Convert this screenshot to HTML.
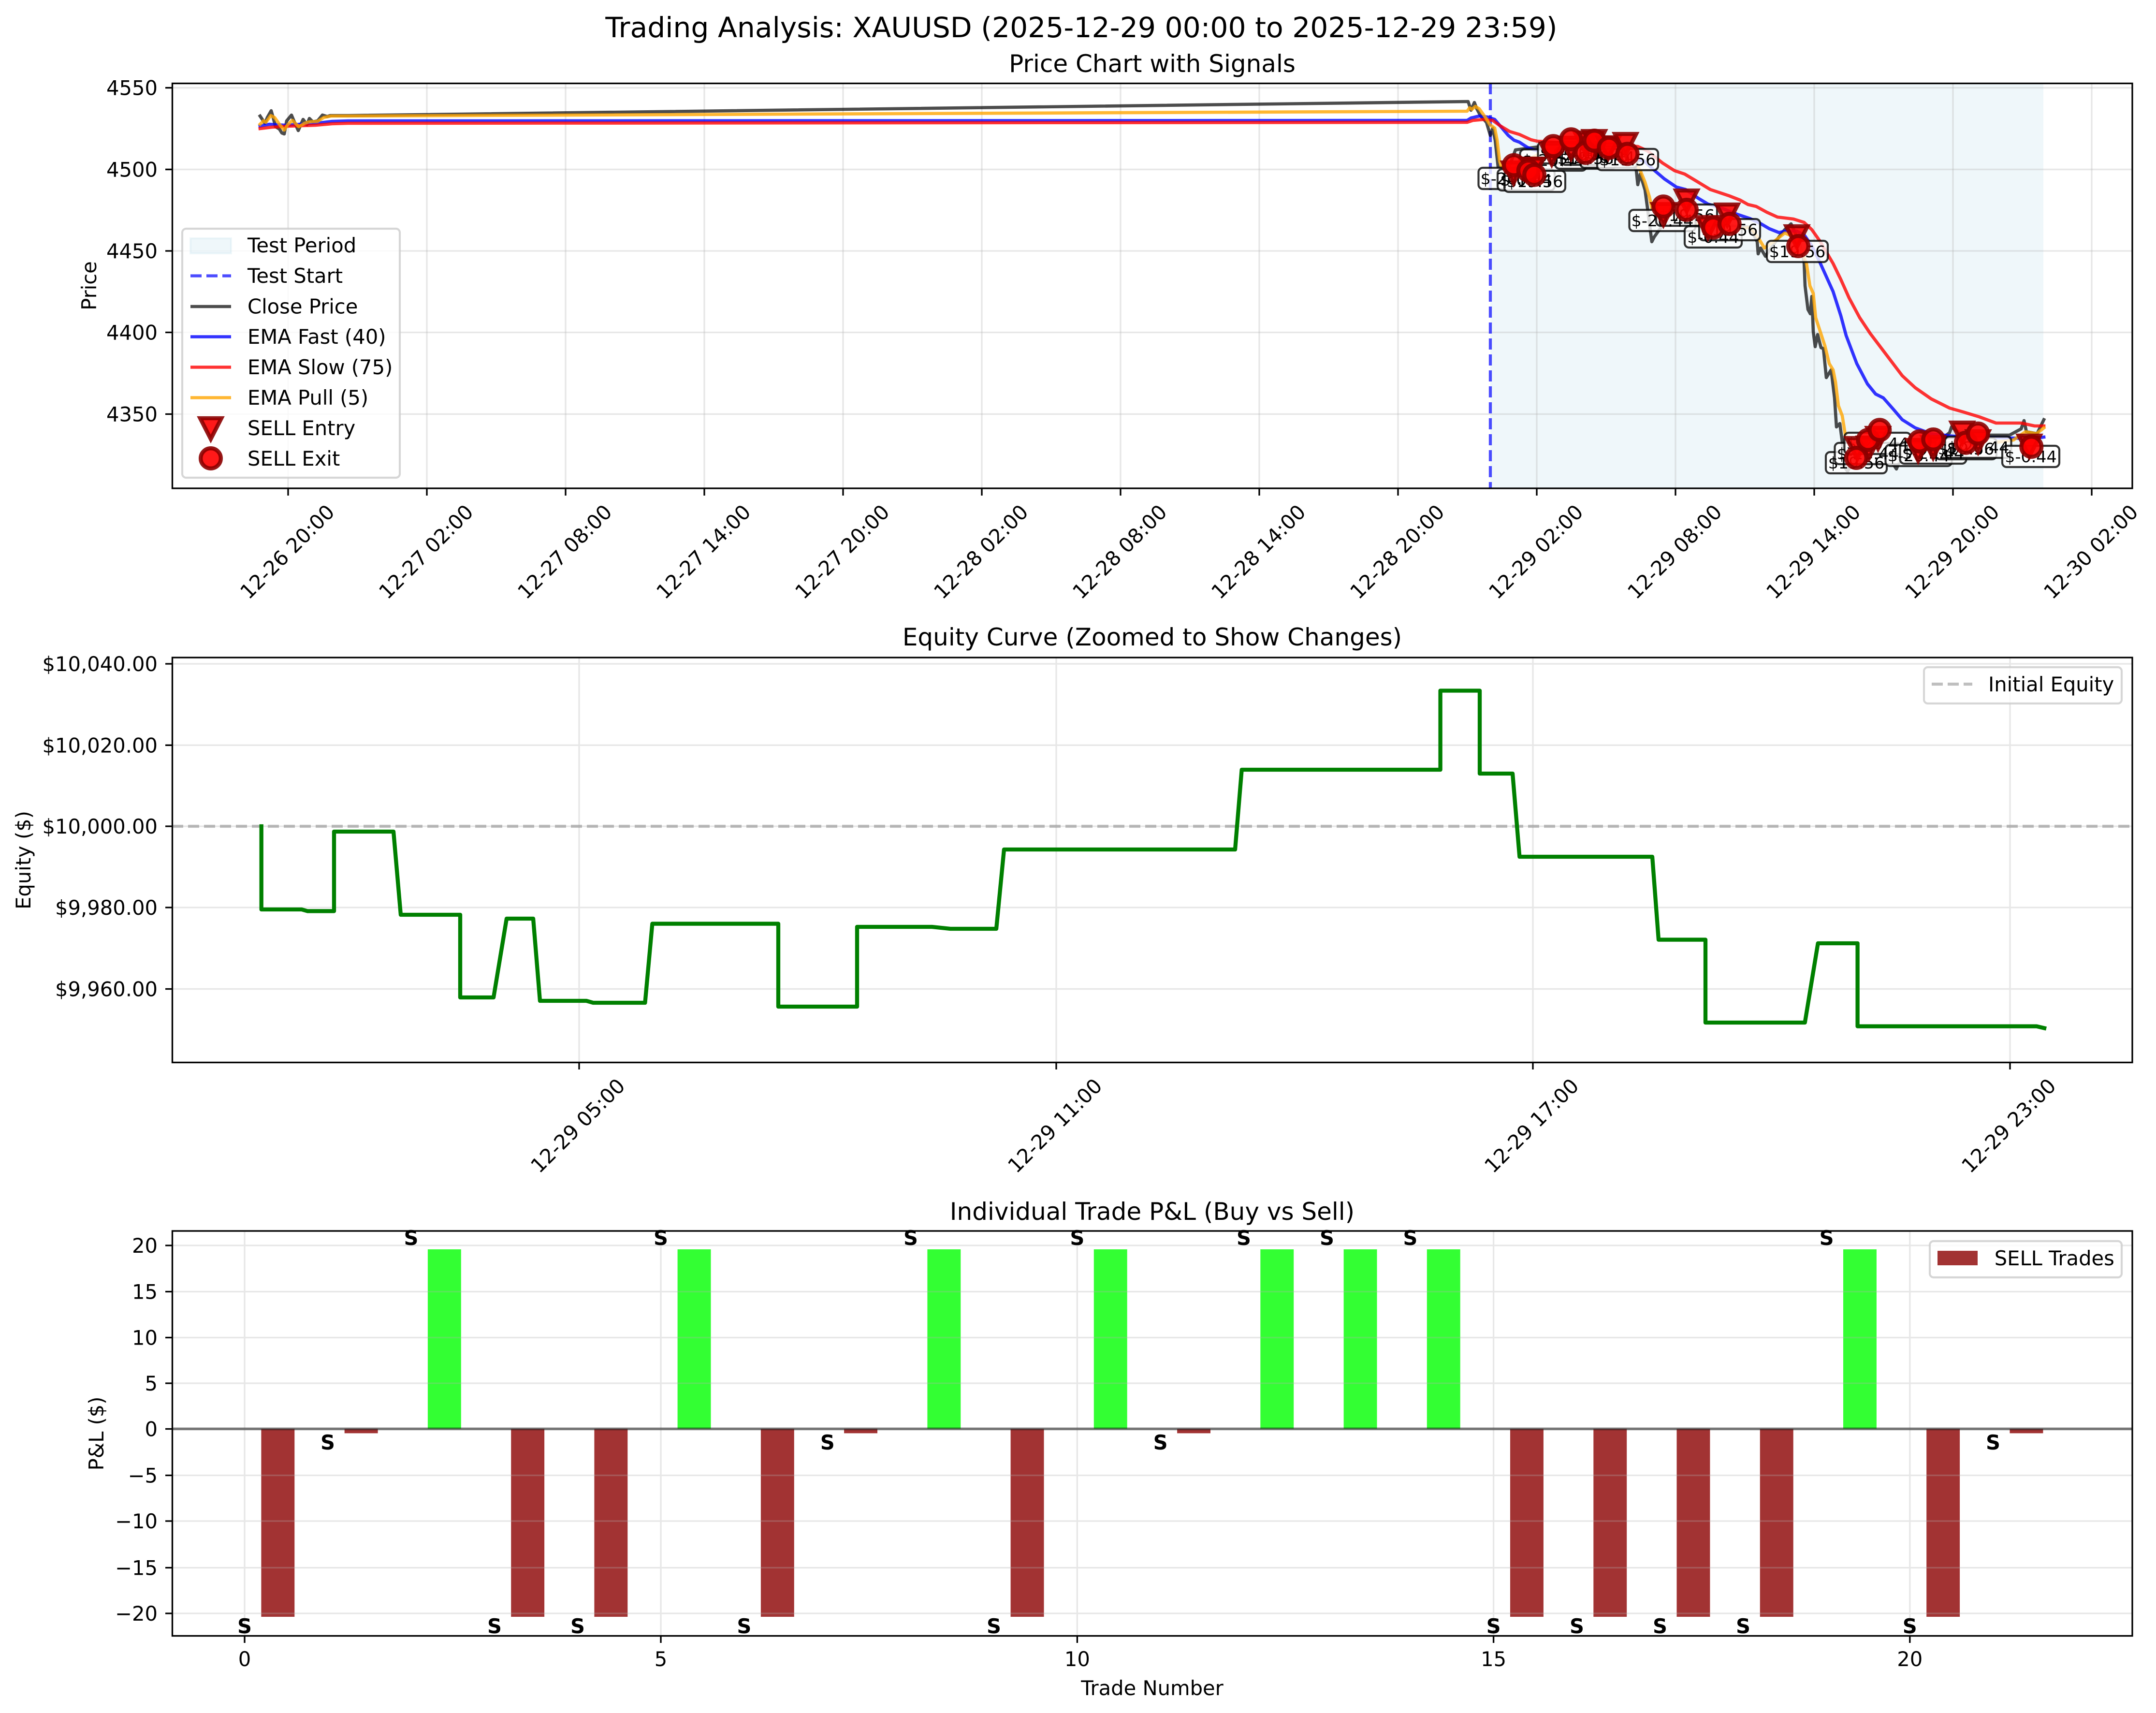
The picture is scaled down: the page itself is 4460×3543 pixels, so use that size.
<!DOCTYPE html>
<html><head><meta charset="utf-8"><title>Trading Analysis</title>
<style>html,body{margin:0;padding:0;background:#fff}svg{display:block}text{font-family:"DejaVu Sans","Liberation Sans",sans-serif;fill:#000}</style></head>
<body>
<svg xmlns="http://www.w3.org/2000/svg" width="4460" height="3543" viewBox="0 0 4460 3543">
<rect width="4460" height="3543" fill="#fff"/>
<text x="2237" y="77" font-size="58.33" text-anchor="middle">Trading Analysis: XAUUSD (2025-12-29 00:00 to 2025-12-29 23:59)</text>
<text x="2383.5" y="149" font-size="50" text-anchor="middle">Price Chart with Signals</text>
<text x="2383.5" y="1335" font-size="50" text-anchor="middle">Equity Curve (Zoomed to Show Changes)</text>
<text x="2383.5" y="2523" font-size="50" text-anchor="middle">Individual Trade P&amp;L (Buy vs Sell)</text>

<!-- AX1 -->
<rect x="3083" y="172.5" width="1144" height="837.5" fill="#add8e6" fill-opacity=".2"/>
<g stroke="#b0b0b0" stroke-opacity=".3" stroke-width="3.33" fill="none">
<path d="M356 181.6H4411M356 350.4H4411M356 519H4411M356 687.5H4411M356 856.5H4411"/>
<path d="M596 172V1010M883 172V1010M1170 172V1010M1457 172V1010M1744 172V1010M2031 172V1010M2318 172V1010M2605 172V1010M2892 172V1010M3179 172V1010M3466 172V1010M3753 172V1010M4040 172V1010M4327 172V1010"/>
</g>
<path d="M3083 172V1010" stroke="#0000ff" stroke-opacity=".7" stroke-width="6.25" stroke-dasharray="23 10" fill="none"/>
<g fill="none" stroke-width="6.6" stroke-linejoin="round" stroke-linecap="square">
<path stroke="#000" stroke-opacity=".7" d="M538 240L548 255L553 243L561 229L565 243L570 262L578 267L583 275L588 277L593 250L603 238L608 250L617 270L627 247L635 258L640 245L647 252L657 250L667 238L677 241L683 239L720 239L3037 210L3043 228L3050 212L3055 225L3063 240L3075 253L3083 280L3088 265L3093 290L3099 345L3120 350L3135 310L3210 300L3290 295L3370 320L3385 353L3388 382L3393 360L3403 393L3408 430L3417 500L3422 490L3440 465L3490 445L3550 465L3620 470L3635 500L3637 525L3642 513L3652 530L3680 490L3692 475L3705 463L3722 500L3732 541L3734 591L3740 640L3745 649L3748 613L3751 686L3755 717L3760 692L3767 719L3772 721L3778 781L3788 765L3795 823L3799 883L3806 876L3811 914L3815 965L3822 975L3835 950L3870 940L3890 930L3910 950L3923 970L3935 940L3975 920L4020 905L4033 895L4037 883L4060 900L4157 900L4181 887L4187 870L4192 893L4214 897L4228 868"/>
<path stroke="#0000ff" stroke-opacity=".8" d="M538 261L557 257L590 259L620 257L653 255L687 251L720 250L3035 249L3043 244L3060 240L3077 242L3092 247L3103 260L3120 280L3132 290L3143 294L3160 305L3173 310L3240 322L3330 328L3400 332L3423 353L3443 370L3468 387L3487 392L3513 410L3533 422L3560 430L3593 443L3620 452L3643 463L3660 473L3680 481L3693 478L3717 478L3733 487L3747 507L3764 541L3792 603L3808 653L3819 694L3841 752L3863 794L3880 815L3896 823L3918 848L3935 868L3962 885L3995 897L4039 902L4094 904L4160 906L4203 907L4228 904"/>
<path stroke="#ff0000" stroke-opacity=".8" d="M538 266L563 263L597 261L653 259L687 256L720 255L3035 253L3047 249L3070 247L3088 249L3103 260L3123 272L3143 278L3167 289L3180 292L3250 296L3320 298L3388 303L3408 312L3439 337L3464 353L3485 360L3510 375L3538 392L3577 405L3600 414L3616 423L3633 427L3655 439L3677 449L3710 453L3732 460L3748 475L3765 499L3792 545L3808 578L3825 616L3847 657L3869 690L3891 719L3913 748L3935 777L3962 802L3995 825L4033 844L4061 852L4094 862L4129 875L4181 875L4209 881L4228 881"/>
<path stroke="#ffa500" stroke-opacity=".8" d="M538 257L545 250L550 253L560 239L568 243L578 257L588 269L595 258L605 249L618 262L630 255L640 252L657 251L670 243L685 240L720 240L3035 230L3040 223L3045 226L3052 220L3060 225L3073 243L3082 258L3092 265L3097 290L3102 333L3105 343L3130 350L3160 330L3215 305L3250 295L3290 300L3330 310L3380 335L3392 350L3403 377L3412 407L3417 430L3430 440L3460 455L3490 450L3520 470L3590 475L3620 470L3638 493L3650 513L3657 508L3673 497L3692 482L3712 490L3730 527L3737 545L3744 591L3751 607L3756 657L3775 715L3784 752L3792 765L3797 790L3803 839L3811 860L3817 898L3830 925L3870 935L3950 930L4030 920L4070 915L4130 915L4165 910L4190 893L4213 897L4228 885"/>
</g>

<!-- P&L labels -->
<g fill="#fff" fill-opacity=".8" stroke="#000" stroke-opacity=".8" stroke-width="4.17">
<rect x="3058.5" y="347" width="137" height="44" rx="9"/>
<rect x="3098" y="350" width="118" height="44" rx="9"/>
<rect x="3112" y="353" width="126" height="44" rx="9"/>
<rect x="3144.5" y="309" width="137" height="44" rx="9"/>
<rect x="3181.5" y="294" width="137" height="44" rx="9"/>
<rect x="3217" y="305" width="126" height="44" rx="9"/>
<rect x="3229.5" y="297" width="137" height="44" rx="9"/>
<rect x="3269" y="303" width="118" height="44" rx="9"/>
<rect x="3304" y="308" width="126" height="44" rx="9"/>
<rect x="3370.5" y="434" width="137" height="44" rx="9"/>
<rect x="3426" y="423" width="126" height="44" rx="9"/>
<rect x="3485" y="468" width="118" height="44" rx="9"/>
<rect x="3515" y="453" width="126" height="44" rx="9"/>
<rect x="3655" y="498" width="126" height="44" rx="9"/>
<rect x="3777" y="935" width="126" height="44" rx="9"/>
<rect x="3795.5" y="916" width="137" height="44" rx="9"/>
<rect x="3815.5" y="895" width="137" height="44" rx="9"/>
<rect x="3900.5" y="920" width="137" height="44" rx="9"/>
<rect x="3930.5" y="915" width="137" height="44" rx="9"/>
<rect x="4004" y="906" width="126" height="44" rx="9"/>
<rect x="4023.5" y="903" width="137" height="44" rx="9"/>
<rect x="4142" y="922" width="118" height="44" rx="9"/>
</g>
<g font-size="33.33" text-anchor="middle">
<text x="3127" y="381">$-20.44</text><text x="3157" y="384">$-0.44</text><text x="3175" y="387">$19.56</text>
<text x="3213" y="343">$-20.44</text><text x="3250" y="328">$-20.44</text><text x="3280" y="339">$19.56</text>
<text x="3298" y="331">$-20.44</text><text x="3328" y="337">$-0.44</text><text x="3367" y="342">$19.56</text>
<text x="3439" y="468">$-20.44</text><text x="3489" y="457">$19.56</text><text x="3544" y="502">$-0.44</text>
<text x="3578" y="487">$19.56</text><text x="3718" y="532">$19.56</text>
<text x="3840" y="969">$19.56</text><text x="3864" y="950">$-20.44</text><text x="3884" y="929">$-20.44</text>
<text x="3969" y="954">$-20.44</text><text x="3999" y="949">$-20.44</text><text x="4067" y="940">$19.56</text>
<text x="4092" y="937">$-20.44</text><text x="4201" y="956">$-0.44</text>
</g>

<!-- markers -->
<g fill="#f00" fill-opacity=".9" stroke="#8b0000" stroke-opacity=".9" stroke-width="8.33" stroke-linejoin="miter">
<path d="M-22-21H22L0 22Z" transform="translate(3131 357)"/>
<path d="M-22-21H22L0 22Z" transform="translate(3167 350)"/>
<path d="M-22-21H22L0 22Z" transform="translate(3171 349)"/>
<path d="M-22-21H22L0 22Z" transform="translate(3210 318)"/>
<path d="M-22-21H22L0 22Z" transform="translate(3250 306)"/>
<path d="M-22-21H22L0 22Z" transform="translate(3280 295)"/>
<path d="M-22-21H22L0 22Z" transform="translate(3298 292)"/>
<path d="M-22-21H22L0 22Z" transform="translate(3327 305)"/>
<path d="M-22-21H22L0 22Z" transform="translate(3362.7 298)"/>
<path d="M-22-21H22L0 22Z" transform="translate(3441 443)"/>
<path d="M-22-21H22L0 22Z" transform="translate(3489 415)"/>
<path d="M-22-21H22L0 22Z" transform="translate(3533 470)"/>
<path d="M-22-21H22L0 22Z" transform="translate(3573 444)"/>
<path d="M-22-21H22L0 22Z" transform="translate(3717 489)"/>
<path d="M-22-21H22L0 22Z" transform="translate(3842 927)"/>
<path d="M-22-21H22L0 22Z" transform="translate(3866 926)"/>
<path d="M-22-21H22L0 22Z" transform="translate(3885 906)"/>
<path d="M-22-21H22L0 22Z" transform="translate(3968 931)"/>
<path d="M-22-21H22L0 22Z" transform="translate(3999 925)"/>
<path d="M-22-21H22L0 22Z" transform="translate(4059 895)"/>
<path d="M-22-21H22L0 22Z" transform="translate(4092 913)"/>
<path d="M-22-21H22L0 22Z" transform="translate(4198 922)"/>
<circle cx="3131.7" cy="341.7" r="20.83"/><circle cx="3161.7" cy="353" r="20.83"/><circle cx="3174" cy="361.7" r="20.83"/>
<circle cx="3213.3" cy="302.3" r="20.83"/><circle cx="3250" cy="288.3" r="20.83"/><circle cx="3280" cy="316" r="20.83"/>
<circle cx="3298.3" cy="291" r="20.83"/><circle cx="3328.3" cy="305.7" r="20.83"/><circle cx="3366.7" cy="318.3" r="20.83"/>
<circle cx="3441" cy="427.3" r="20.83"/><circle cx="3489" cy="434" r="20.83"/><circle cx="3544" cy="470.7" r="20.83"/>
<circle cx="3577.7" cy="463" r="20.83"/><circle cx="3720" cy="509" r="20.83"/>
<circle cx="3840" cy="947" r="20.83"/><circle cx="3864.3" cy="910" r="20.83"/><circle cx="3888.3" cy="889.3" r="20.83"/>
<circle cx="3971" cy="913" r="20.83"/><circle cx="3999.3" cy="909" r="20.83"/><circle cx="4066.7" cy="915.7" r="20.83"/>
<circle cx="4091.7" cy="896.7" r="20.83"/><circle cx="4202.3" cy="924" r="20.83"/>
</g>

<!-- AX1 legend -->
<rect x="377" y="473" width="450" height="515" rx="8" fill="#fff" fill-opacity=".8" stroke="#ccc" stroke-opacity=".8" stroke-width="4.17"/>
<rect x="394" y="493" width="84" height="31" fill="#add8e6" fill-opacity=".2" stroke="#add8e6" stroke-opacity=".2" stroke-width="4"/>
<path d="M394 570.5H478" stroke="#0000ff" stroke-opacity=".7" stroke-width="6.25" stroke-dasharray="23 10" fill="none"/>
<path d="M394 634H478" stroke="#000" stroke-opacity=".7" stroke-width="6.6" fill="none"/>
<path d="M394 696.5H478" stroke="#0000ff" stroke-opacity=".8" stroke-width="6.6" fill="none"/>
<path d="M394 759.5H478" stroke="#ff0000" stroke-opacity=".8" stroke-width="6.6" fill="none"/>
<path d="M394 822.5H478" stroke="#ffa500" stroke-opacity=".8" stroke-width="6.6" fill="none"/>
<g fill="#f00" fill-opacity=".9" stroke="#8b0000" stroke-opacity=".9" stroke-width="8.33">
<path d="M-22-21H22L0 22Z" transform="translate(436 886)"/>
<circle cx="436" cy="948" r="20.83"/>
</g>
<g font-size="41.67">
<text x="512" y="522">Test Period</text><text x="512" y="585">Test Start</text><text x="512" y="648.5">Close Price</text>
<text x="512" y="711">EMA Fast (40)</text><text x="512" y="774">EMA Slow (75)</text><text x="512" y="837">EMA Pull (5)</text>
<text x="512" y="900">SELL Entry</text><text x="512" y="963">SELL Exit</text>
</g>

<!-- AX1 frame/ticks -->
<rect x="356.5" y="172.5" width="4054.5" height="837.5" fill="none" stroke="#000" stroke-width="3.33"/>
<path stroke="#000" stroke-width="3.33" fill="none" d="M342 181.6H356M342 350.4H356M342 519H356M342 687.5H356M342 856.5H356M596 1010V1025M883 1010V1025M1170 1010V1025M1457 1010V1025M1744 1010V1025M2031 1010V1025M2318 1010V1025M2605 1010V1025M2892 1010V1025M3179 1010V1025M3466 1010V1025M3753 1010V1025M4040 1010V1025M4327 1010V1025"/>
<g font-size="41.67" text-anchor="end">
<text x="326" y="196.6">4550</text><text x="326" y="365.4">4500</text><text x="326" y="534">4450</text><text x="326" y="702.5">4400</text><text x="326" y="871.5">4350</text>
</g>
<text font-size="41.67" text-anchor="middle" transform="translate(199 591) rotate(-90)">Price</text>
<g font-size="41.67" text-anchor="middle">
<text transform="translate(594 1141) rotate(-45)" y="15">12-26 20:00</text>
<text transform="translate(881 1141) rotate(-45)" y="15">12-27 02:00</text>
<text transform="translate(1168 1141) rotate(-45)" y="15">12-27 08:00</text>
<text transform="translate(1455 1141) rotate(-45)" y="15">12-27 14:00</text>
<text transform="translate(1742 1141) rotate(-45)" y="15">12-27 20:00</text>
<text transform="translate(2029 1141) rotate(-45)" y="15">12-28 02:00</text>
<text transform="translate(2316 1141) rotate(-45)" y="15">12-28 08:00</text>
<text transform="translate(2603 1141) rotate(-45)" y="15">12-28 14:00</text>
<text transform="translate(2890 1141) rotate(-45)" y="15">12-28 20:00</text>
<text transform="translate(3177 1141) rotate(-45)" y="15">12-29 02:00</text>
<text transform="translate(3464 1141) rotate(-45)" y="15">12-29 08:00</text>
<text transform="translate(3751 1141) rotate(-45)" y="15">12-29 14:00</text>
<text transform="translate(4038 1141) rotate(-45)" y="15">12-29 20:00</text>
<text transform="translate(4325 1141) rotate(-45)" y="15">12-30 02:00</text>
</g>

<!-- AX2 -->
<g stroke="#b0b0b0" stroke-opacity=".3" stroke-width="3.33" fill="none">
<path d="M356 1373H4411M356 1541.3H4411M356 1709H4411M356 1877H4411M356 2045.5H4411M1198 1360V2197M2185 1360V2197M3171 1360V2197M4158 1360V2197"/>
</g>
<path d="M356 1709H4411" stroke="#808080" stroke-opacity=".5" stroke-width="6.25" stroke-dasharray="23 10" fill="none"/>
<path fill="none" stroke="#008000" stroke-width="8.33" stroke-linejoin="round" stroke-linecap="square" d="M540.7 1709L540.7 1881L624 1881L636 1884.4L691 1884.4L691 1720L814 1720L829 1892L952 1892L952 2063L1021 2063L1048 1900L1103 1900L1117 2070L1213 2070L1227 2074L1334.4 2074L1349.4 1910.6L1610 1910.6L1610 2082L1773 2082L1773 1917L1928 1917L1966 1921L2061 1921L2077 1757L2555 1757L2568.7 1592L2979.6 1592L2979.6 1428.5L3061 1428.5L3061 1600L3129 1600L3143.4 1772L3418 1772L3431 1943.6L3528 1943.6L3528 2115L3733.7 2115L3760.7 1951L3842.6 1951L3842.6 2122.7L4213 2122.7L4229 2126.5"/>
<rect x="3980" y="1380" width="409" height="75" rx="8" fill="#fff" fill-opacity=".8" stroke="#ccc" stroke-opacity=".8" stroke-width="4.17"/>
<path d="M3996 1415H4080" stroke="#808080" stroke-opacity=".5" stroke-width="6.25" stroke-dasharray="23 10" fill="none"/>
<text x="4113" y="1430" font-size="41.67">Initial Equity</text>
<rect x="356.5" y="1360" width="4054.5" height="837.5" fill="none" stroke="#000" stroke-width="3.33"/>
<path stroke="#000" stroke-width="3.33" fill="none" d="M342 1373H356M342 1541.3H356M342 1709H356M342 1877H356M342 2045.5H356M1198 2197V2212M2185 2197V2212M3171 2197V2212M4158 2197V2212"/>
<g font-size="41.67" text-anchor="end">
<text x="326" y="1388">$10,040.00</text><text x="326" y="1556.3">$10,020.00</text><text x="326" y="1724">$10,000.00</text><text x="326" y="1892">$9,980.00</text><text x="326" y="2060.5">$9,960.00</text>
</g>
<text font-size="41.67" text-anchor="middle" transform="translate(63 1779) rotate(-90)">Equity ($)</text>
<g font-size="41.67" text-anchor="middle">
<text transform="translate(1195 2328) rotate(-45)" y="15">12-29 05:00</text>
<text transform="translate(2182 2328) rotate(-45)" y="15">12-29 11:00</text>
<text transform="translate(3168 2328) rotate(-45)" y="15">12-29 17:00</text>
<text transform="translate(4155 2328) rotate(-45)" y="15">12-29 23:00</text>
</g>

<!-- AX3 -->
<g fill="#8b0000" fill-opacity=".8">
<rect x="540.4" y="2955.4" width="68.9" height="388.6"/><rect x="712.7" y="2955.4" width="68.9" height="9"/>
<rect x="1057.2" y="2955.4" width="68.9" height="388.6"/><rect x="1229.4" y="2955.4" width="68.9" height="388.6"/>
<rect x="1573.9" y="2955.4" width="68.9" height="388.6"/><rect x="1746.1" y="2955.4" width="68.9" height="9"/>
<rect x="2090.6" y="2955.4" width="68.9" height="388.6"/><rect x="2435.1" y="2955.4" width="68.9" height="9"/>
<rect x="3124" y="2955.4" width="68.9" height="388.6"/><rect x="3296.3" y="2955.4" width="68.9" height="388.6"/>
<rect x="3468.5" y="2955.4" width="68.9" height="388.6"/><rect x="3640.8" y="2955.4" width="68.9" height="388.6"/>
<rect x="3985.2" y="2955.4" width="68.9" height="388.6"/><rect x="4157.5" y="2955.4" width="68.9" height="9"/>
</g>
<g fill="#00ff00" fill-opacity=".8">
<rect x="884.9" y="2584" width="68.9" height="371.4"/><rect x="1401.6" y="2584" width="68.9" height="371.4"/>
<rect x="1918.4" y="2584" width="68.9" height="371.4"/><rect x="2262.8" y="2584" width="68.9" height="371.4"/>
<rect x="2607.3" y="2584" width="68.9" height="371.4"/><rect x="2779.6" y="2584" width="68.9" height="371.4"/>
<rect x="2951.8" y="2584" width="68.9" height="371.4"/><rect x="3813" y="2584" width="68.9" height="371.4"/>
</g>
<g stroke="#b0b0b0" stroke-opacity=".3" stroke-width="3.33" fill="none">
<path d="M356 2576H4411M356 2671.5H4411M356 2766.5H4411M356 2861H4411M356 2955.5H4411M356 3051.5H4411M356 3146H4411M356 3242.5H4411M356 3337H4411M506 2546V3383M1367 2546V3383M2228.4 2546V3383M3089.6 2546V3383M3950.8 2546V3383"/>
</g>
<path d="M356 2955.4H4411" stroke="#000" stroke-opacity=".5" stroke-width="5.5" fill="none"/>
<rect x="3992" y="2567" width="397" height="75" rx="8" fill="#fff" fill-opacity=".8" stroke="#ccc" stroke-opacity=".8" stroke-width="4.17"/>
<rect x="4008" y="2587" width="83" height="30" fill="#8b0000" fill-opacity=".8"/>
<text x="4125.7" y="2617" font-size="41.67">SELL Trades</text>
<rect x="356.5" y="2546" width="4054.5" height="837.5" fill="none" stroke="#000" stroke-width="3.33"/>
<path stroke="#000" stroke-width="3.33" fill="none" d="M342 2576H356M342 2671.5H356M342 2766.5H356M342 2861H356M342 2955.5H356M342 3051.5H356M342 3146H356M342 3242.5H356M342 3337H356M506 3383V3398M1367 3383V3398M2228.4 3383V3398M3089.6 3383V3398M3950.8 3383V3398"/>
<g font-size="41.67" text-anchor="end">
<text x="326" y="2591">20</text><text x="326" y="2686.5">15</text><text x="326" y="2781.5">10</text><text x="326" y="2876">5</text><text x="326" y="2970.5">0</text>
<text x="326" y="3066.5">−5</text><text x="326" y="3161">−10</text><text x="326" y="3257.5">−15</text><text x="326" y="3352">−20</text>
</g>
<g font-size="41.67" text-anchor="middle">
<text x="506" y="3446">0</text><text x="1367" y="3446">5</text><text x="2228.4" y="3446">10</text><text x="3089.6" y="3446">15</text><text x="3950.8" y="3446">20</text>
<text x="2383.5" y="3506">Trade Number</text>
</g>
<text font-size="41.67" text-anchor="middle" transform="translate(214 2965) rotate(-90)">P&amp;L ($)</text>
<g font-size="41.67" font-weight="bold" text-anchor="middle">
<text x="506" y="3378">S</text><text x="678" y="2998">S</text><text x="850.5" y="2575">S</text><text x="1023" y="3378">S</text>
<text x="1195" y="3378">S</text><text x="1367" y="2575">S</text><text x="1539.4" y="3378">S</text><text x="1711.7" y="2998">S</text>
<text x="1884" y="2575">S</text><text x="2056" y="3378">S</text><text x="2228.4" y="2575">S</text><text x="2400.6" y="2998">S</text>
<text x="2573" y="2575">S</text><text x="2745" y="2575">S</text><text x="2917.4" y="2575">S</text><text x="3089.6" y="3378">S</text>
<text x="3262" y="3378">S</text><text x="3434" y="3378">S</text><text x="3606" y="3378">S</text><text x="3778.6" y="2575">S</text>
<text x="3950.8" y="3378">S</text><text x="4123" y="2998">S</text>
</g>
</svg>
</body></html>
